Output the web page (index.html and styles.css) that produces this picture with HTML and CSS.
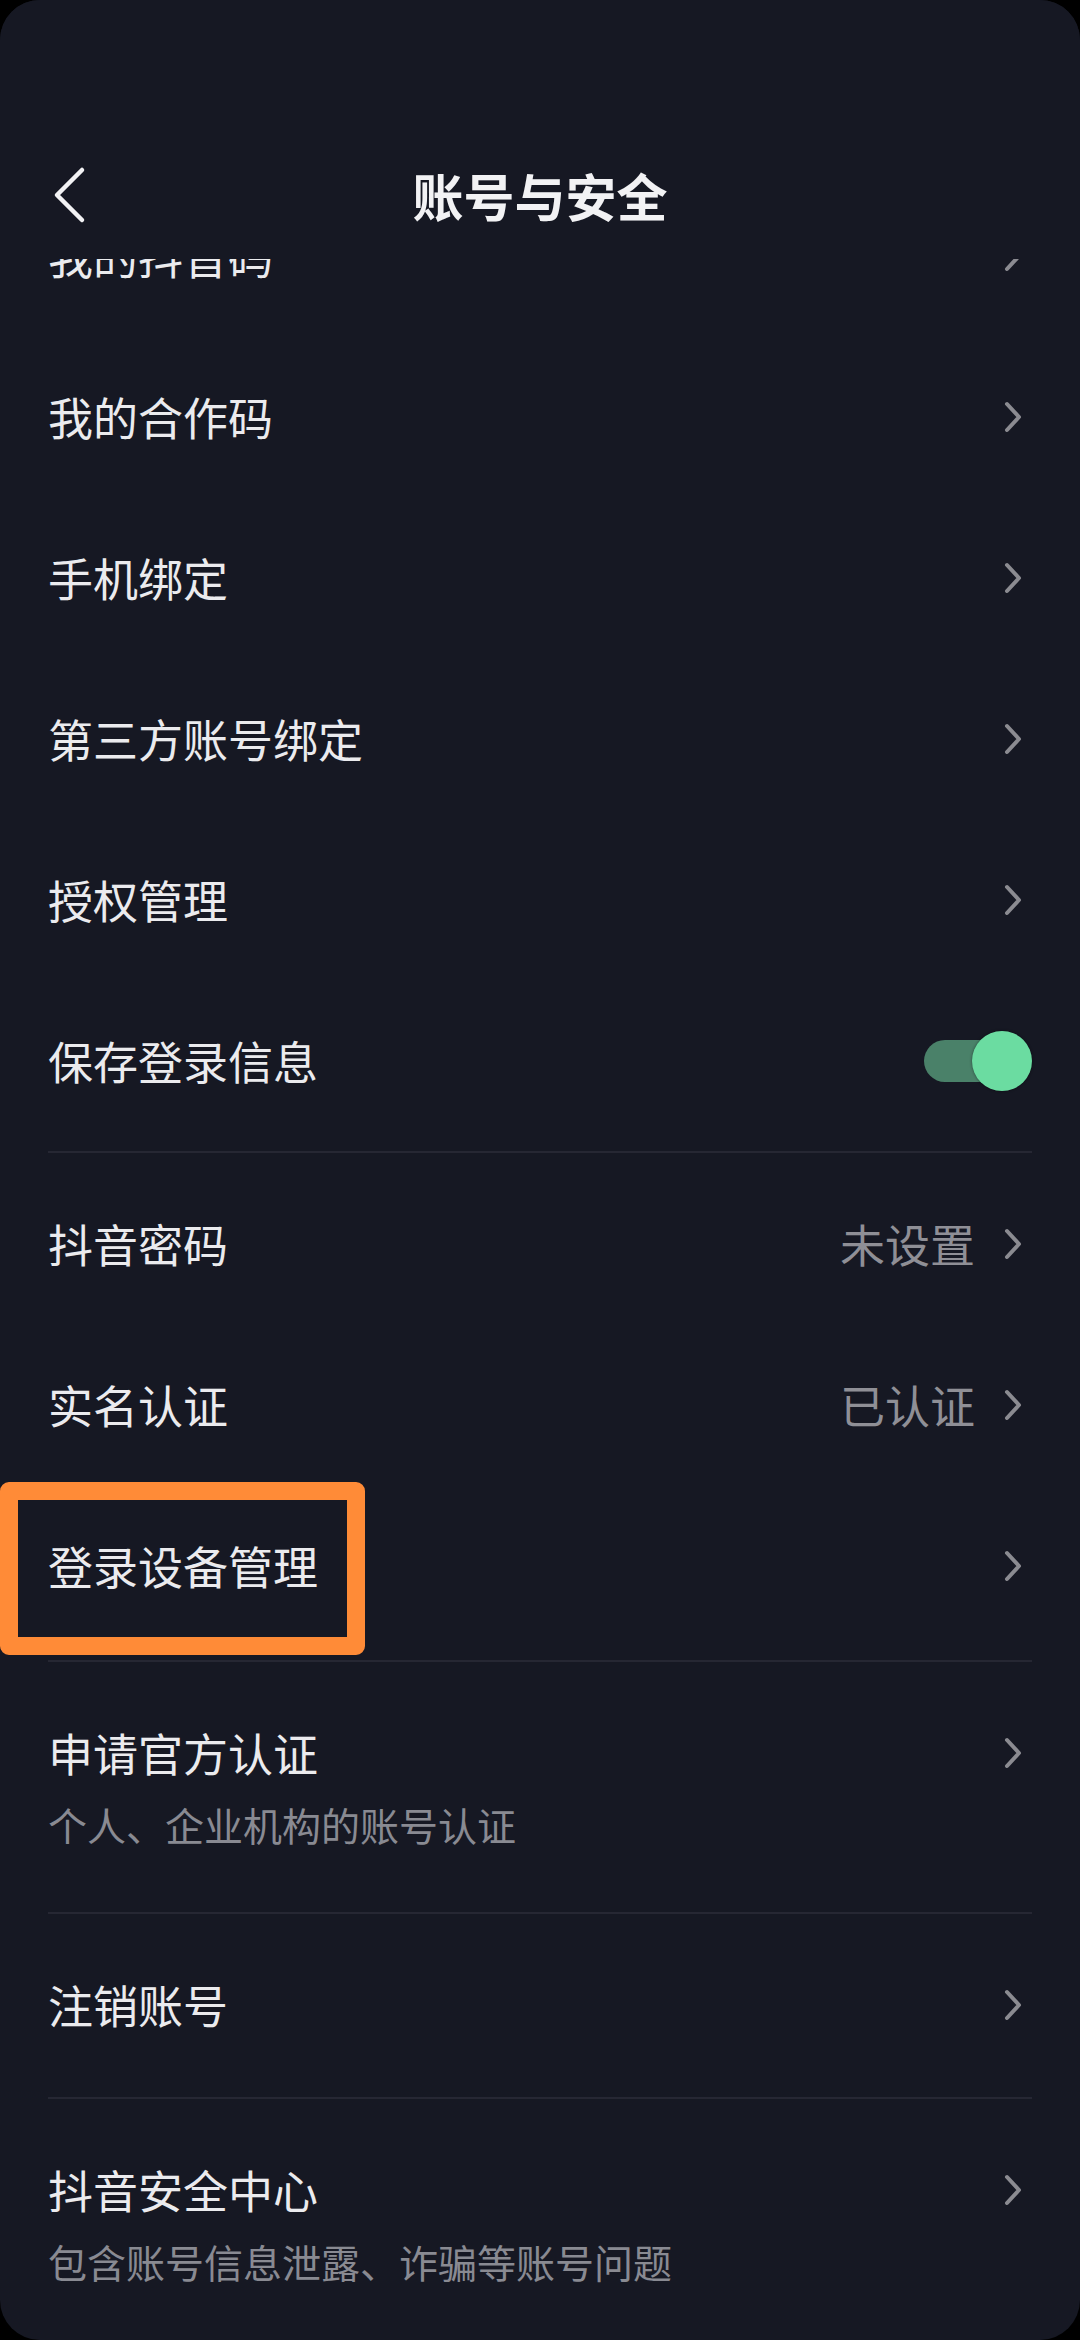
FILE: index.html
```html
<!DOCTYPE html>
<html lang="zh-CN">
<head>
<meta charset="utf-8">
<title>账号与安全</title>
<link rel="stylesheet" href="styles.css">
</head>
<body>
<div class="screen">
  <header class="topbar">
    <div class="nav">
      <div class="nav-left">
        <svg class="back" width="34" height="58" viewBox="0 0 34 58"><path d="M30 4 L5 29 L30 54" fill="none" stroke="#f2f2f4" stroke-width="4.5" stroke-linecap="round" stroke-linejoin="round"/></svg>
      </div>
      <h1 class="title">账号与安全</h1>
      <div class="nav-right"></div>
    </div>
  </header>
  <main class="list">
    <div class="scroll">
      <section class="group group-first">
        <div class="row"><span class="label">我的抖音码</span><svg class="chev" width="20" height="32" viewBox="0 0 20 32"><path d="M4 3 L16 16 L4 29" fill="none" stroke="#8b8b91" stroke-width="4" stroke-linecap="round" stroke-linejoin="round"/></svg></div>
        <div class="row"><span class="label">我的合作码</span><svg class="chev" width="20" height="32" viewBox="0 0 20 32"><path d="M4 3 L16 16 L4 29" fill="none" stroke="#8b8b91" stroke-width="4" stroke-linecap="round" stroke-linejoin="round"/></svg></div>
        <div class="row"><span class="label">手机绑定</span><svg class="chev" width="20" height="32" viewBox="0 0 20 32"><path d="M4 3 L16 16 L4 29" fill="none" stroke="#8b8b91" stroke-width="4" stroke-linecap="round" stroke-linejoin="round"/></svg></div>
        <div class="row"><span class="label">第三方账号绑定</span><svg class="chev" width="20" height="32" viewBox="0 0 20 32"><path d="M4 3 L16 16 L4 29" fill="none" stroke="#8b8b91" stroke-width="4" stroke-linecap="round" stroke-linejoin="round"/></svg></div>
        <div class="row"><span class="label">授权管理</span><svg class="chev" width="20" height="32" viewBox="0 0 20 32"><path d="M4 3 L16 16 L4 29" fill="none" stroke="#8b8b91" stroke-width="4" stroke-linecap="round" stroke-linejoin="round"/></svg></div>
        <div class="row"><span class="label">保存登录信息</span>
          <div class="toggle"><span class="track"></span><span class="knob"></span></div>
        </div>
      </section>
      <section class="group group-mid">
        <div class="row"><span class="label">抖音密码</span><span class="value">未设置</span><svg class="chev" width="20" height="32" viewBox="0 0 20 32"><path d="M4 3 L16 16 L4 29" fill="none" stroke="#8b8b91" stroke-width="4" stroke-linecap="round" stroke-linejoin="round"/></svg></div>
        <div class="row"><span class="label">实名认证</span><span class="value">已认证</span><svg class="chev" width="20" height="32" viewBox="0 0 20 32"><path d="M4 3 L16 16 L4 29" fill="none" stroke="#8b8b91" stroke-width="4" stroke-linecap="round" stroke-linejoin="round"/></svg></div>
        <div class="row row-marked"><span class="label">登录设备管理</span><svg class="chev" width="20" height="32" viewBox="0 0 20 32"><path d="M4 3 L16 16 L4 29" fill="none" stroke="#8b8b91" stroke-width="4" stroke-linecap="round" stroke-linejoin="round"/></svg>
          <span class="highlight"></span>
        </div>
      </section>
      <section class="group group-card">
        <div class="card-head"><span class="label">申请官方认证</span><svg class="chev" width="20" height="32" viewBox="0 0 20 32"><path d="M4 3 L16 16 L4 29" fill="none" stroke="#8b8b91" stroke-width="4" stroke-linecap="round" stroke-linejoin="round"/></svg></div>
        <p class="sub">个人、企业机构的账号认证</p>
      </section>
      <section class="group">
        <div class="row"><span class="label">注销账号</span><svg class="chev" width="20" height="32" viewBox="0 0 20 32"><path d="M4 3 L16 16 L4 29" fill="none" stroke="#8b8b91" stroke-width="4" stroke-linecap="round" stroke-linejoin="round"/></svg></div>
      </section>
      <section class="group group-card">
        <div class="card-head"><span class="label">抖音安全中心</span><svg class="chev" width="20" height="32" viewBox="0 0 20 32"><path d="M4 3 L16 16 L4 29" fill="none" stroke="#8b8b91" stroke-width="4" stroke-linecap="round" stroke-linejoin="round"/></svg></div>
        <p class="sub">包含账号信息泄露、诈骗等账号问题</p>
      </section>
    </div>
  </main>
</div>
</body>
</html>
```
FILE: styles.css
```css
* { box-sizing: border-box; }
html, body { margin: 0; padding: 0; background: #000; }
body {
  font-family: "Noto Sans CJK SC", "Noto Sans", sans-serif;
  color: #ebebee;
}
.screen {
  width: 1080px;
  height: 2340px;
  background: #161823;
  border-radius: 40px;
  overflow: hidden;
  display: flex;
  flex-direction: column;
}
.topbar {
  height: 259px;
  flex: 0 0 259px;
  padding-top: 140px;
  background: #161823;
  position: relative;
  z-index: 2;
}
.nav {
  height: 110px;
  display: grid;
  grid-template-columns: 1fr auto 1fr;
  align-items: center;
}
.nav-left { padding-left: 52px; display: flex; align-items: center; }
.back { display: block; }
.title {
  margin: 0;
  font-size: 51px;
  font-weight: 700;
  color: #f2f2f4;
  line-height: 60px;
}
.list {
  flex: 1;
  overflow: hidden;
}
.scroll { margin-top: -84px; }
.group {
  margin: 0 48px;
  border-top: 2px solid #262733;
  padding: 10px 0 12px;
}
.group-first { border-top: none; padding: 0 0 10px; }
.group-mid { padding-bottom: 14px; }
.row {
  height: 161px;
  display: flex;
  align-items: center;
  position: relative;
}
.label {
  font-size: 45px;
  line-height: 60px;
  color: #ebebee;
  flex: 1;
}
.value {
  font-size: 45px;
  line-height: 60px;
  color: #8f8f96;
  margin-right: 28px;
}
.chev { display: block; flex: 0 0 auto; margin-right: 9px; }
.toggle {
  position: relative;
  width: 108px;
  height: 60px;
}
.track {
  position: absolute;
  left: 0;
  top: 9px;
  width: 92px;
  height: 42px;
  border-radius: 21px;
  background: #4a8169;
}
.knob {
  position: absolute;
  right: 0;
  top: 0;
  width: 60px;
  height: 60px;
  border-radius: 50%;
  background: #6bdca1;
  box-shadow: 0 0 3px rgba(0, 0, 0, 0.45);
}
.highlight {
  position: absolute;
  left: -48px;
  top: -3px;
  width: 365px;
  height: 173px;
  border: 18px solid #ff8b37;
  border-radius: 9px;
}
.group-card { padding: 61px 0 63px; }
.card-head {
  display: flex;
  align-items: center;
  height: 60px;
}
.sub {
  margin: 16px 0 0;
  font-size: 39px;
  line-height: 50px;
  color: #898a92;
}
```
